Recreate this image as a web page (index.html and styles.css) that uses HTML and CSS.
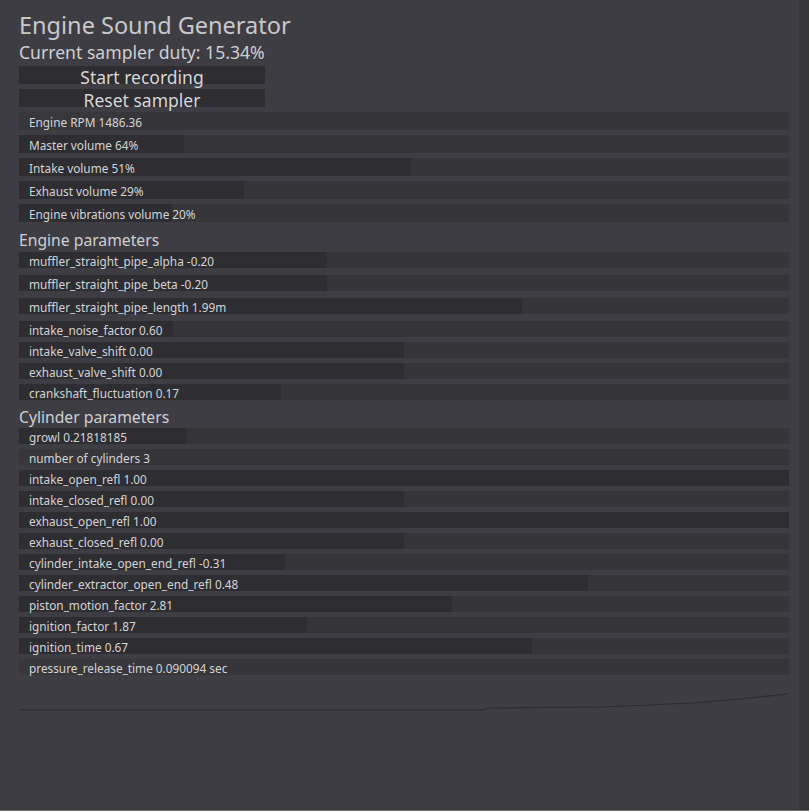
FILE: index.html
```html
<!DOCTYPE html>
<html>
<head>
<meta charset="utf-8">
<link rel="stylesheet" href="styles.css">
</head>
<body>
<div class="app">
  <main class="panel">
    <h1 class="title">Engine Sound Generator</h1>
    <div class="duty">Current sampler duty: 15.34%</div>
    <div class="buttons">
      <button class="btn">Start recording</button>
      <button class="btn">Reset sampler</button>
    </div>
    <div class="group big">
      <div class="bar"><div class="fill faint" style="width:105px"></div><span class="lbl">Engine RPM 1486.36</span></div>
      <div class="bar"><div class="fill" style="width:165px"></div><span class="lbl">Master volume 64%</span></div>
      <div class="bar"><div class="fill" style="width:392px"></div><span class="lbl">Intake volume 51%</span></div>
      <div class="bar"><div class="fill" style="width:225px"></div><span class="lbl">Exhaust volume 29%</span></div>
      <div class="bar"><div class="fill" style="width:153px"></div><span class="lbl">Engine vibrations volume 20%</span></div>
    </div>
    <h2 class="heading">Engine parameters</h2>
    <div class="group engine">
      <div class="bar wide"><div class="fill" style="width:308px"></div><span class="lbl">muffler_straight_pipe_alpha -0.20</span></div>
      <div class="bar wide"><div class="fill" style="width:308px"></div><span class="lbl">muffler_straight_pipe_beta -0.20</span></div>
      <div class="bar wide"><div class="fill" style="width:503px"></div><span class="lbl">muffler_straight_pipe_length 1.99m</span></div>
      <div class="bar wide"><div class="fill" style="width:154px"></div><span class="lbl">intake_noise_factor 0.60</span></div>
      <div class="bar"><div class="fill" style="width:385px"></div><span class="lbl">intake_valve_shift 0.00</span></div>
      <div class="bar"><div class="fill" style="width:385px"></div><span class="lbl">exhaust_valve_shift 0.00</span></div>
      <div class="bar"><div class="fill" style="width:262px"></div><span class="lbl">crankshaft_fluctuation 0.17</span></div>
    </div>
    <h2 class="heading cyl">Cylinder parameters</h2>
    <div class="group cylinder">
      <div class="bar"><div class="fill" style="width:168px"></div><span class="lbl">growl 0.21818185</span></div>
      <div class="bar"><div class="fill faint" style="width:102px"></div><span class="lbl">number of cylinders 3</span></div>
      <div class="bar"><div class="fill" style="width:770px"></div><span class="lbl">intake_open_refl 1.00</span></div>
      <div class="bar"><div class="fill" style="width:385px"></div><span class="lbl">intake_closed_refl 0.00</span></div>
      <div class="bar"><div class="fill" style="width:770px"></div><span class="lbl">exhaust_open_refl 1.00</span></div>
      <div class="bar"><div class="fill" style="width:385px"></div><span class="lbl">exhaust_closed_refl 0.00</span></div>
      <div class="bar"><div class="fill" style="width:266px"></div><span class="lbl">cylinder_intake_open_end_refl -0.31</span></div>
      <div class="bar"><div class="fill" style="width:569px"></div><span class="lbl">cylinder_extractor_open_end_refl 0.48</span></div>
      <div class="bar"><div class="fill" style="width:433px"></div><span class="lbl">piston_motion_factor 2.81</span></div>
      <div class="bar"><div class="fill" style="width:288px"></div><span class="lbl">ignition_factor 1.87</span></div>
      <div class="bar"><div class="fill" style="width:513px"></div><span class="lbl">ignition_time 0.67</span></div>
      <div class="bar"><div class="fill faint" style="width:163px"></div><span class="lbl">pressure_release_time 0.090094 sec</span></div>
    </div>
    <svg class="chart" width="770" height="24" viewBox="0 0 770 24">
      <polyline points="0,21 464,21 468,19.5 473,19 520,18.5 581,18 630,16 681,13.5 720,10 769,5" fill="none" stroke="#2c2b30" stroke-width="1.2"/>
    </svg>
  </main>
  <div class="scrollbar"></div>
</div>
</body>
</html>
```

FILE: styles.css
```css
* {
  box-sizing: border-box;
}

html, body {
  margin: 0;
  padding: 0;
  height: 100%;
  background: #3e3d43;
  overflow: hidden;
}

body {
  font-family: "Noto Sans", "Open Sans", sans-serif;
  color: #d2d2d4;
}

.app {
  display: flex;
  height: 811px;
  border-bottom: 1px solid #707070;
}

.panel {
  flex: 1;
  display: flex;
  flex-direction: column;
  padding: 10px 10px 0 19px;
}

.scrollbar {
  width: 10px;
  background: #37363b;
}

.title {
  margin: 0;
  font-size: 23.5px;
  font-weight: 400;
  line-height: 30px;
  color: #c8c8cb;
}

.duty {
  margin-top: 2px;
  font-size: 17.6px;
  line-height: 20px;
  color: #cfcfd2;
}

.buttons {
  margin-top: 4px;
  display: flex;
  flex-direction: column;
  gap: 5px;
  width: 246px;
}

.btn {
  height: 18px;
  padding: 0;
  border: none;
  background: #2e2d32;
  color: #d6d6d8;
  font-family: inherit;
  font-size: 17.5px;
  line-height: 23px;
  text-align: center;
  overflow: visible;
  white-space: nowrap;
}

.group {
  display: flex;
  flex-direction: column;
  gap: 5px;
  width: 770px;
}

.group.big {
  margin-top: 5px;
}

.bar {
  position: relative;
  display: flex;
  height: 16px;
  background: #36353a;
}

.group.big .bar {
  height: 18px;
}

.group.engine .bar.wide + .bar.wide {
  margin-top: 2px;
}

.fill {
  flex: none;
  height: 100%;
  background: #2e2d32;
}

.fill.faint {
  background: #38373c;
}

.lbl {
  position: absolute;
  left: 10px;
  top: 1px;
  font-size: 11.8px;
  line-height: 16px;
  white-space: nowrap;
  color: #d4d4d6;
}

.group.big .lbl {
  top: 2px;
}

.heading {
  margin: 8px 0 2px;
  font-size: 15.7px;
  font-weight: 400;
  line-height: 20px;
  color: #cfcfd2;
}

.heading.cyl {
  margin: 7px 0 1px;
}

.chart {
  display: block;
  margin-top: 14px;
}
```
